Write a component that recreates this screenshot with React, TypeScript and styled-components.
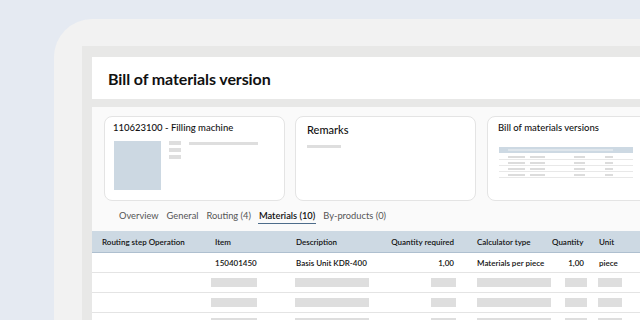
import * as React from "react";
import styled, { createGlobalStyle } from "styled-components";

const GlobalStyle = createGlobalStyle`
  html, body { margin: 0; padding: 0; }
  body {
    background: #e5eaf2;
    font-family: Lato, "Open Sans", "Liberation Sans", sans-serif;
    color: #111;
  }
`;

const Page = styled.div`
  width: 640px;
  height: 320px;
  overflow: hidden;
  background: #e5eaf2;
  padding: 19px 0 0 54px;
  box-sizing: border-box;
`;

const Frame = styled.div`
  width: 640px;
  height: 340px;
  background: #f2f2f2;
  border-top-left-radius: 38px;
  padding: 27px 0 0 28px;
  box-sizing: border-box;
`;

const Screen = styled.div`
  width: 600px;
  background: #e8e8e7;
  padding: 11px 0 0 10px;
  box-sizing: border-box;
  display: flex;
  flex-direction: column;
  gap: 8px;
`;

const Header = styled.div`
  flex: none;
  height: 42px;
  background: #fff;
  display: flex;
  align-items: center;
  padding-left: 16px;
  font-size: 16px;
  font-weight: 700;
  letter-spacing: -0.1px;
`;

const Panel = styled.div`
  flex: none;
  background: #fafafa;
  display: flex;
  flex-direction: column;
`;

const CardRow = styled.div`
  display: flex;
  gap: 10px;
  padding: 9px 0 0 12px;
`;

const Card = styled.div<{ $w: number }>`
  flex: none;
  width: ${(p) => p.$w}px;
  height: 85px;
  background: #fff;
  border: 1px solid #e4e4e4;
  border-radius: 8px;
  box-sizing: border-box;
  padding: 5px 0 0 8px;
`;

const CardTitle = styled.div<{ $size: number }>`
  font-size: ${(p) => p.$size}px;
  font-weight: 500;
  line-height: 12px;
  color: #111;
`;

const MachineBody = styled.div`
  display: flex;
  gap: 8px;
  margin-top: 7px;
  margin-left: 1px;
`;

const Thumb = styled.div`
  width: 47px;
  height: 49px;
  background: #ccd8e2;
`;

const Stack = styled.div`
  display: flex;
  flex-direction: column;
  gap: 3px;
`;

const Bar = styled.div<{ $w: number; $h?: number; $ml?: number }>`
  width: ${(p) => p.$w}px;
  height: ${(p) => p.$h ?? 9}px;
  margin-left: ${(p) => p.$ml ?? 0}px;
  background: #dedede;
`;

const MiniTable = styled.svg`
  display: block;
  margin: 13px 0 0 1px;
`;

const Tabs = styled.div`
  display: flex;
  gap: 6px;
  padding: 9px 0 0 26px;
  height: 22px;
  box-sizing: border-box;
  font-size: 9.3px;
`;

const Tab = styled.div<{ $active?: boolean }>`
  line-height: 12px;
  height: 13px;
  color: ${(p) => (p.$active ? "#111" : "#555")};
  font-weight: ${(p) => (p.$active ? 600 : 400)};
  border-bottom: 1px solid ${(p) => (p.$active ? "#4d6c8a" : "transparent")};
  padding: 0 1px;
`;

const Table = styled.div`
  margin-top: 8px;
  background: #fff;
`;

const cols = "113px 81px 80px 78px 98px 32px 60px";

const HeadRow = styled.div`
  display: grid;
  grid-template-columns: ${cols};
  height: 22px;
  align-items: center;
  padding-left: 10px;
  background: #cdd9e3;
  border-bottom: 1px solid #aebfcf;
  box-sizing: border-box;
  font-size: 8px;
  font-weight: 600;
  color: #111;
`;

const Row = styled.div`
  display: grid;
  grid-template-columns: ${cols};
  height: 20px;
  align-items: center;
  padding-left: 10px;
  border-bottom: 1px solid #e4e4e4;
  box-sizing: border-box;
  font-size: 8px;
  font-weight: 600;
`;

const Cell = styled.div<{ $right?: boolean; $pl?: number }>`
  text-align: ${(p) => (p.$right ? "right" : "left")};
  padding-left: ${(p) => p.$pl ?? 0}px;
  white-space: nowrap;
`;

const MiniVersions = () => {
  const rows = [156, 162, 168, 174];
  const bars: [number, number][] = [
    [9, 17],
    [31, 15],
    [75, 11],
    [106, 8],
  ];
  return (
    <MiniTable width="134" height="34" viewBox="0 0 134 34">
      <rect x="0" y="0" width="134" height="6" fill="#cdd9e3" />
      <rect x="9" y="2" width="105" height="2" fill="#dfe6ec" />
      {rows.map((y, i) => (
        <g key={i}>
          {bars.map(([x, w], j) => (
            <rect key={j} x={x} y={y - 147} width={w} height="2" fill="#dcdcdc" />
          ))}
          <rect x="0" y={y - 147 + 3} width="134" height="1" fill="#e8e8e8" />
        </g>
      ))}
    </MiniTable>
  );
};

const placeholder = (
  <>
    <Cell />
    <Cell>
      <Bar $w={46} $ml={-4} />
    </Cell>
    <Cell>
      <Bar $w={74} $ml={-1} />
    </Cell>
    <Cell>
      <Bar $w={25} $ml={55} />
    </Cell>
    <Cell $pl={23}>
      <Bar $w={74} />
    </Cell>
    <Cell>
      <Bar $w={22} $ml={13} />
    </Cell>
    <Cell $pl={14}>
      <Bar $w={24} />
    </Cell>
  </>
);

const App = () => {
  return (
    <Page>
      <GlobalStyle />
      <Frame>
        <Screen>
          <Header>Bill of materials version</Header>
          <Panel>
            <CardRow>
              <Card $w={181}>
                <CardTitle $size={9.5}>110623100 - Filling machine</CardTitle>
                <MachineBody>
                  <Thumb />
                  <Stack>
                    <Bar $w={12} $h={4} />
                    <Bar $w={12} $h={4} />
                    <Bar $w={12} $h={4} />
                  </Stack>
                  <Bar $w={69} $h={3} style={{ marginTop: 1 }} />
                </MachineBody>
              </Card>
              <Card $w={181} style={{ paddingLeft: 11 }}>
                <CardTitle $size={11} style={{ marginTop: 2 }}>
                  Remarks
                </CardTitle>
                <Bar $w={34} $h={3} style={{ marginTop: 9 }} />
              </Card>
              <Card $w={182} style={{ marginLeft: 1, paddingLeft: 10 }}>
                <CardTitle $size={9.5}>Bill of materials versions</CardTitle>
                <MiniVersions />
              </Card>
            </CardRow>
            <Tabs>
              <Tab>Overview</Tab>
              <Tab>General</Tab>
              <Tab>Routing (4)</Tab>
              <Tab $active>Materials (10)</Tab>
              <Tab>By-products (0)</Tab>
            </Tabs>
            <Table>
              <HeadRow>
                <Cell>Routing step Operation</Cell>
                <Cell>Item</Cell>
                <Cell>Description</Cell>
                <Cell $right>Quantity required</Cell>
                <Cell $pl={23}>Calculator type</Cell>
                <Cell>Quantity</Cell>
                <Cell $pl={15}>Unit</Cell>
              </HeadRow>
              <Row>
                <Cell />
                <Cell>150401450</Cell>
                <Cell>Basis Unit KDR-400</Cell>
                <Cell $right>1,00</Cell>
                <Cell $pl={23}>Materials per piece</Cell>
                <Cell $right>1,00</Cell>
                <Cell $pl={15}>piece</Cell>
              </Row>
              <Row>{placeholder}</Row>
              <Row>{placeholder}</Row>
              <Row>{placeholder}</Row>
            </Table>
          </Panel>
        </Screen>
      </Frame>
    </Page>
  );
};

export default App;
